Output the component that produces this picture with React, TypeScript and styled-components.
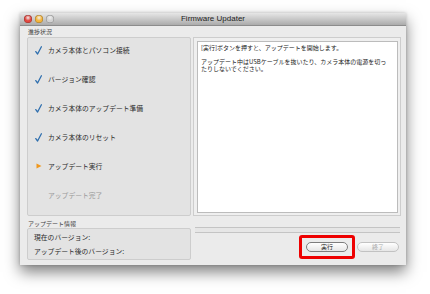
import React from 'react';
import styled, { createGlobalStyle } from 'styled-components';

const GlobalStyle = createGlobalStyle`
  html, body {
    margin: 0;
    padding: 0;
    background: #ffffff;
  }
  body {
    font-family: "Noto Sans CJK JP", "Liberation Sans", sans-serif;
  }
`;

type StepState = 'done' | 'current' | 'pending';

const steps: { label: string; state: StepState }[] = [
  { label: 'カメラ本体とパソコン接続', state: 'done' },
  { label: 'バージョン確認', state: 'done' },
  { label: 'カメラ本体のアップデート準備', state: 'done' },
  { label: 'カメラ本体のリセット', state: 'done' },
  { label: 'アップデート実行', state: 'current' },
  { label: 'アップデート完了', state: 'pending' },
];

const Check = () => (
  <svg width="7" height="9" viewBox="0 0 7 9">
    <path d="M0.8 5.6 L2.6 8 L6.4 0.8" fill="none" stroke="#2f6fae" strokeWidth="1.3" strokeLinecap="round" strokeLinejoin="round" />
  </svg>
);

const Arrow = () => (
  <svg width="6" height="6" viewBox="0 0 6 6">
    <path d="M0.5 0.5 L5.5 3 L0.5 5.5 Z" fill="#f0981e" />
  </svg>
);

const App = () => (
  <>
    <GlobalStyle />
    <Page>
      <Window>
        <TitleBar>
          <Lights>
            <Light color="#e2463f" />
            <Light color="#f4b43a" />
            <Light color="#d2d2d2" />
          </Lights>
          <Title>Firmware Updater</Title>
        </TitleBar>

        <Body>
          <Column>
            <GroupLabel>進捗状況</GroupLabel>
            <StepsPanel>
              {steps.map((s) => (
                <StepRow key={s.label}>
                  <StepIcon>
                    {s.state === 'done' && <Check />}
                    {s.state === 'current' && <Arrow />}
                  </StepIcon>
                  <StepText pending={s.state === 'pending'}>{s.label}</StepText>
                </StepRow>
              ))}
            </StepsPanel>
          </Column>

          <Column>
            <GroupLabel />
            <MessageFrame>
              <MessageBox>
                <p>[実行]ボタンを押すと、アップデートを開始します。</p>
                <p>アップデート中はUSBケーブルを抜いたり、カメラ本体の電源を切ったりしないでください。</p>
              </MessageBox>
            </MessageFrame>
          </Column>

          <Column>
            <SmallLabel>アップデート情報</SmallLabel>
            <InfoPanel>
              <InfoLine>現在のバージョン:</InfoLine>
              <InfoLine>アップデート後のバージョン:</InfoLine>
            </InfoPanel>
          </Column>

          <Column>
            <ProgressTrack />
            <ButtonRow>
              <Highlight>
                <PillButton>実行</PillButton>
              </Highlight>
              <PillButton disabled>終了</PillButton>
            </ButtonRow>
          </Column>
        </Body>
      </Window>
    </Page>
  </>
);

export default App;

const Page = styled.div`
  width: 430px;
  height: 294px;
  padding: 13px 0 0 20px;
  box-sizing: border-box;
`;

const Window = styled.div`
  width: 386px;
  height: 252px;
  background: #ebebeb;
  box-shadow: 0 7px 14px rgba(0, 0, 0, 0.5), 0 0 3px rgba(0, 0, 0, 0.2);
  display: flex;
  flex-direction: column;
`;

const TitleBar = styled.div`
  height: 12px;
  position: relative;
  display: flex;
  align-items: center;
  justify-content: center;
  background: linear-gradient(#e6e6e6, #ababab);
  border-bottom: 1px solid #8c8c8c;
`;

const Lights = styled.div`
  position: absolute;
  left: 4px;
  top: 2px;
  display: flex;
  gap: 3px;
`;

const Light = styled.span<{ color: string }>`
  width: 8px;
  height: 8px;
  border-radius: 50%;
  background: radial-gradient(circle at 50% 35%, #ffffffaa 0, ${(p) => p.color} 45%, ${(p) => p.color} 100%);
  box-shadow: inset 0 0 0 0.5px rgba(0, 0, 0, 0.35);
`;

const Title = styled.span`
  font-family: "Liberation Sans", "DejaVu Sans", sans-serif;
  font-size: 8px;
  color: #222;
  line-height: 12px;
`;

const Body = styled.div`
  display: grid;
  grid-template-columns: 164px 208px;
  grid-template-rows: 190px 1fr;
  column-gap: 2px;
  padding: 0 6px 0 7px;
`;

const Column = styled.div`
  display: flex;
  flex-direction: column;
`;

const GroupLabel = styled.div`
  height: 11px;
  padding-left: 1px;
  font-size: 6px;
  line-height: 11px;
  color: #444;
`;

const SmallLabel = styled(GroupLabel)`
  height: 9px;
  margin-top: 3px;
  line-height: 9px;
`;

const StepsPanel = styled.div`
  height: 179px;
  box-sizing: border-box;
  background: #e3e3e3;
  border: 1px solid #cdcdcd;
  border-radius: 2px;
  display: flex;
  flex-direction: column;
  gap: 5px;
`;

const StepRow = styled.div`
  height: 24px;
  display: flex;
  align-items: center;
`;

const StepIcon = styled.div`
  width: 7px;
  margin-left: 7px;
  margin-right: 6px;
  display: flex;
  align-items: center;
  justify-content: center;
`;

const StepText = styled.span<{ pending?: boolean }>`
  font-size: 6.8px;
  color: ${(p) => (p.pending ? '#9a9a9a' : '#2a2a2a')};
  white-space: nowrap;
`;

const MessageFrame = styled.div`
  height: 179px;
  box-sizing: border-box;
  border: 1px solid #cdcdcd;
  background: #efefef;
  padding: 3px 2px 2px 3px;
`;

const MessageBox = styled.div`
  height: 100%;
  box-sizing: border-box;
  background: #ffffff;
  border: 1px solid #bcbcbc;
  padding: 2px 9px 0 3px;
  font-size: 6px;
  line-height: 7px;
  color: #222;

  p {
    margin: 0 0 7px;
  }
`;

const InfoPanel = styled.div`
  height: 32px;
  box-sizing: border-box;
  background: #e3e3e3;
  border: 1px solid #cdcdcd;
  border-radius: 2px;
  padding: 3px 0 0 6px;
  display: flex;
  flex-direction: column;
  gap: 4px;
`;

const InfoLine = styled.div`
  font-size: 6.8px;
  line-height: 10px;
  color: #2a2a2a;
  white-space: nowrap;
`;

const ProgressTrack = styled.div`
  margin: 11px 1px 0 2px;
  height: 6px;
  box-sizing: border-box;
  background: #e6e6e6;
  border-top: 1px solid #c4c4c4;
  border-bottom: 1px solid #c4c4c4;
`;

const ButtonRow = styled.div`
  margin-top: 9px;
  display: flex;
  justify-content: flex-end;
  align-items: flex-start;
  gap: 2px;
  padding-right: 2px;
`;

const Highlight = styled.div`
  border: 3px solid #ee0000;
  border-radius: 3px;
  padding: 4px;
  margin-top: -7px;
  display: flex;
`;

const PillButton = styled.button`
  width: 45px;
  height: 10px;
  padding: 0;
  border-radius: 6px;
  border: 1px solid ${(p) => (p.disabled ? '#c2c2c2' : '#7d7d7d')};
  background: linear-gradient(#ffffff, #e6e6e6);
  font-family: "Noto Sans CJK JP", sans-serif;
  font-size: 6px;
  line-height: 8px;
  color: ${(p) => (p.disabled ? '#a8a8a8' : '#222')};
  display: flex;
  align-items: center;
  justify-content: center;
  &:disabled {
    cursor: default;
  }
  &:last-child {
    width: 42px;
  }
`;
